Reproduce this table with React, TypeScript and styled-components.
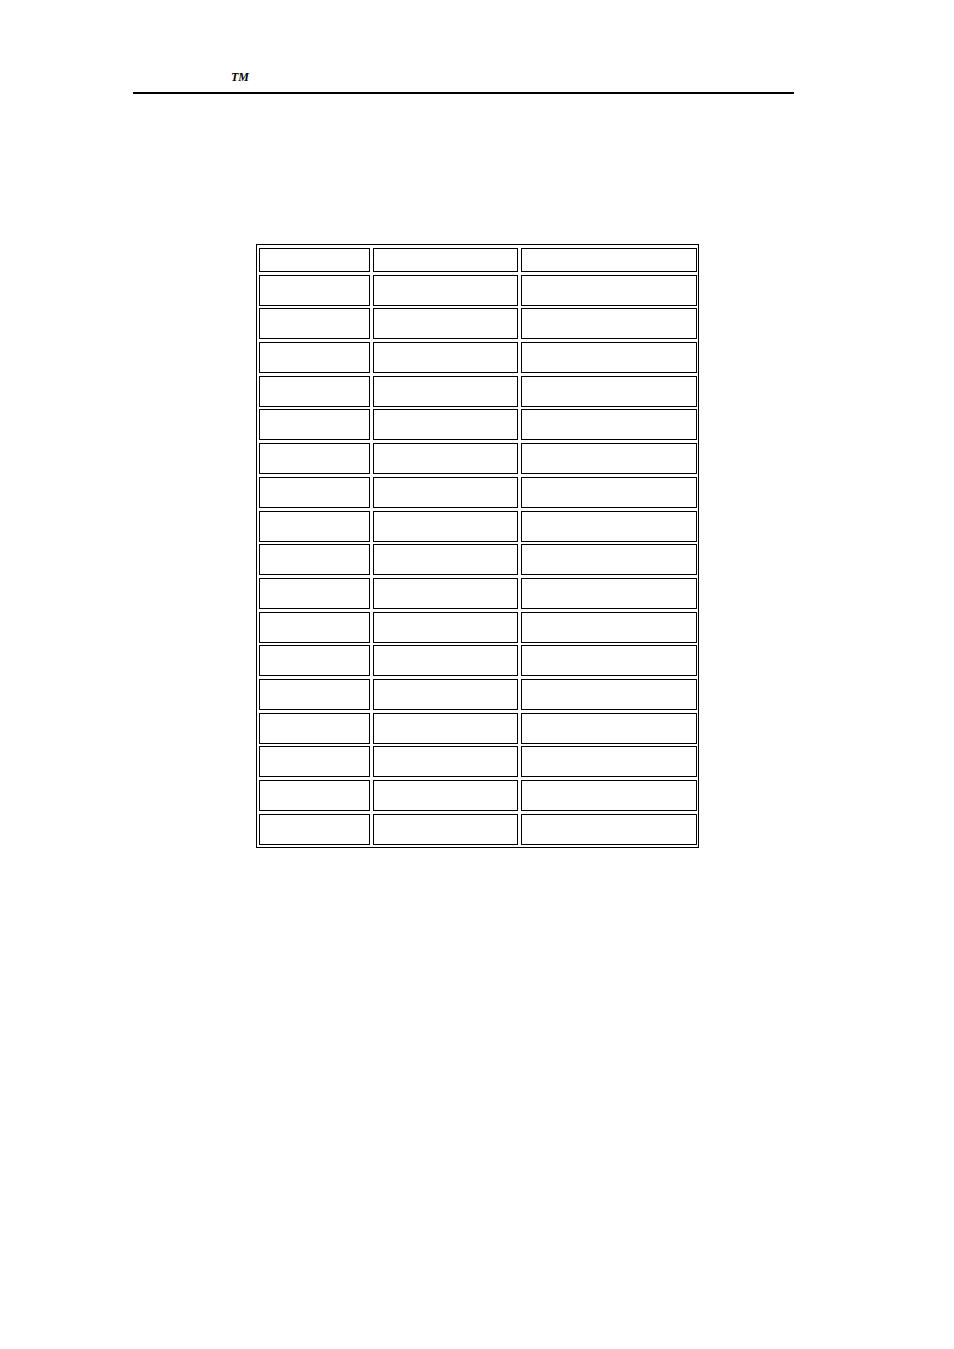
import React from 'react';
import styled, { createGlobalStyle } from 'styled-components';

const GlobalStyle = createGlobalStyle`
  html, body {
    margin: 0;
    padding: 0;
    background: #ffffff;
  }
  body {
    font-family: "Liberation Serif", "Times New Roman", serif;
    color: #000;
  }
`;

const Page = styled.div`
  width: 954px;
  min-height: 1349px;
  display: flex;
  flex-direction: column;
`;

const Header = styled.header`
  margin-left: 133px;
  width: 661px;
  padding-top: 70px;
`;

const Mark = styled.div`
  padding-left: 98px;
  font-size: 12px;
  line-height: 14px;
  font-weight: bold;
  font-style: italic;
  height: 14px;
`;

const Rule = styled.div`
  margin-top: 8px;
  height: 2px;
  background: #000;
`;

const Table = styled.div`
  align-self: flex-start;
  margin: 150px 0 0 256px;
  display: grid;
  grid-template-columns: 111px 145px 176px;
  grid-template-rows: 24px repeat(17, 31px);
  column-gap: 3px;
  row-gap: 2.7px;
  padding: 3px 1px 2px 2px;
  border: 1px solid #000;
`;

const Cell = styled.div`
  border: 1px solid #000;
  box-sizing: border-box;
`;

const ROWS = 18;
const COLS = 3;

export default function App() {
  const cells = Array.from({ length: ROWS * COLS }, (_, i) => i);
  return (
    <>
      <GlobalStyle />
      <Page>
        <Header>
          <Mark>TM</Mark>
          <Rule />
        </Header>
        <Table>
          {cells.map((i) => (
            <Cell key={i} />
          ))}
        </Table>
      </Page>
    </>
  );
}
